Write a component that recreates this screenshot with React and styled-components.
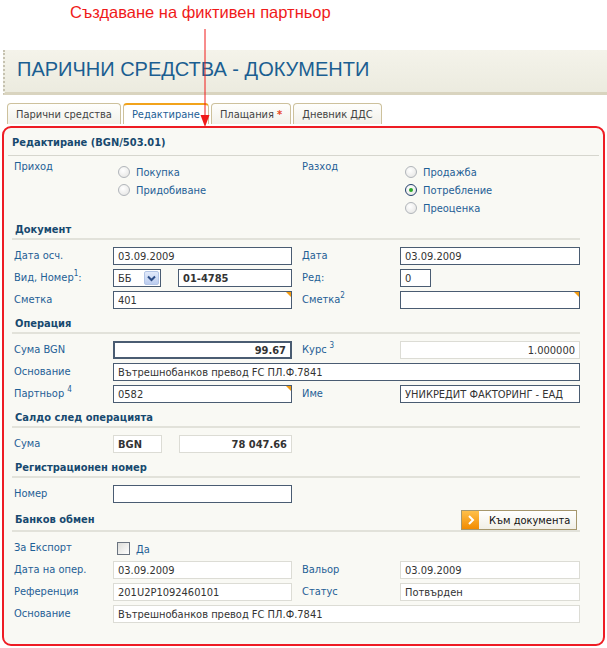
import React from 'react';
import styled, { createGlobalStyle, css } from 'styled-components';

const GlobalStyle = createGlobalStyle`
  html, body {
    margin: 0;
    padding: 0;
    background: #fff;
  }
  body {
    font-family: "DejaVu Sans Condensed", "Liberation Sans", sans-serif;
    font-size: 11px;
    color: #333;
  }
`;

const Page = styled.div`
  position: relative;
  width: 607px;
  height: 648px;
  overflow: hidden;
`;

const Annotation = styled.div`
  height: 50px;
  box-sizing: border-box;
  padding: 3px 0 0 70px;
  font-family: "Liberation Sans", Arial, sans-serif;
  font-size: 16.5px;
  color: #f01a1a;
`;

const Arrow = styled.svg`
  position: absolute;
  left: 199px;
  top: 29px;
`;

const Banner = styled.div`
  margin-left: 3px;
  height: 42px;
  display: flex;
  align-items: center;
  padding-left: 12px;
  border-left: 2px dotted #c6c2b0;
  border-bottom: 3px solid #d9d4bf;
  background: linear-gradient(#f4f3ea, #ecebdf);
`;

const Title = styled.h1`
  margin: 0 0 3px;
  font-family: "Liberation Sans", Arial, sans-serif;
  font-weight: normal;
  font-size: 20px;
  color: #1b5e91;
`;

const Tabs = styled.div`
  display: flex;
  gap: 2px;
  margin-top: 8px;
  padding-left: 7px;
`;

const Tab = styled.div`
  height: 21px;
  box-sizing: border-box;
  display: flex;
  align-items: center;
  padding: 0 8px;
  border: 1px solid #cdc19c;
  border-bottom: none;
  border-radius: 4px 4px 0 0;
  background: linear-gradient(#fefefc, #f2f1ea);
  color: #444;
  ${p => p.$active && css`
    border-top: 2px solid #f2a31b;
    background: #fff;
    color: #1d6096;
  `}
`;

const Star = styled.span`
  color: #e8451c;
  font-weight: bold;
  margin-left: 3px;
`;

const Panel = styled.div`
  margin: 2px 2px 0;
  border: 2px solid #ee1c24;
  border-radius: 9px;
  background: #f9f9f4;
  padding-bottom: 19px;
`;

const PanelHeader = styled.div`
  margin: 0 4px;
  padding: 8px 4px 5px;
  line-height: 14px;
  border-bottom: 1px solid #d6d6ce;
  font-weight: bold;
  color: #17496f;
`;

const Body = styled.div`
  padding: 0 23px 0 8px;
`;

const TypeRow = styled.div`
  display: grid;
  grid-template-columns: 99px 179px 108px 180px;
  align-items: start;
  padding: 3px 0 0 2px;
`;

const Label = styled.div`
  color: #1f6096;
  line-height: 16px;
  white-space: nowrap;
  padding-left: ${p => (p.$right ? 10 : 0)}px;
`;

const Sup = styled.sup`
  font-size: 8px;
  line-height: 0;
  vertical-align: 5px;
  margin-left: ${p => (p.$gap ? 3 : 0)}px;
`;

const RadioList = styled.div`
  display: flex;
  flex-direction: column;
  padding: 4px 0 0 5px;
`;

const RadioItem = styled.label`
  height: 18px;
  display: flex;
  align-items: center;
  gap: 6px;
  color: #1f6096;
`;

const RadioDot = styled.span`
  width: 12px;
  height: 12px;
  box-sizing: border-box;
  border-radius: 50%;
  border: 1px solid ${p => (p.$checked ? '#23406d' : '#b1b5ba')};
  background: radial-gradient(circle at 40% 35%, #ffffff, #e2e2e0);
  display: flex;
  align-items: center;
  justify-content: center;
  &::after {
    content: '';
    width: 4px;
    height: 4px;
    border-radius: 50%;
    background: ${p => (p.$checked ? '#2aa62a' : 'transparent')};
  }
`;

const Section = styled.div`
  margin-top: 5px;
`;

const SectionHead = styled.div`
  display: flex;
  align-items: center;
  justify-content: space-between;
  min-height: 16px;
  padding: 0 3px;
  border-bottom: 2px solid #e2e2da;
`;

const SectionTitle = styled.div`
  font-weight: bold;
  color: #17496f;
  line-height: 16px;
`;

const Grid = styled.div`
  display: grid;
  grid-template-columns: 99px 179px 108px 180px;
  grid-auto-rows: 22px;
  align-items: center;
  padding: 5px 0 0 2px;
`;

const FieldWrap = styled.div`
  position: relative;
  display: flex;
  gap: 17px;
  width: ${p => (p.$w ? `${p.$w}px` : 'auto')};
  grid-column: ${p => (p.$wide ? '2 / -1' : 'auto')};
`;

const Input = styled.input`
  flex: 1;
  min-width: 0;
  width: 100%;
  height: 18px;
  box-sizing: border-box;
  margin: 0;
  padding: 0 4px;
  font: inherit;
  color: #333;
  background: #fff;
  outline: none;
  border: 1px solid ${p => (p.$ro ? '#dcdcd5' : '#4a5c72')};
  border-width: ${p => (p.$thick ? '2px' : '1px')};
  font-weight: ${p => (p.$bold ? 'bold' : 'normal')};
  text-align: ${p => (p.$right ? 'right' : 'left')};
  ${p => p.$fixed && css`
    flex: none;
    width: ${p.$fixed}px;
  `}
`;

const Corner = styled.span`
  position: absolute;
  top: 1px;
  right: 1px;
  width: 0;
  height: 0;
  border-top: 5px solid #f39c12;
  border-left: 5px solid transparent;
`;

const Select = styled.div`
  width: 48px;
  height: 18px;
  box-sizing: border-box;
  border: 1px solid #4a5c72;
  background: #fff;
  display: flex;
  align-items: center;
  justify-content: space-between;
  padding-left: 4px;
  color: #333;
`;

const DropBtn = styled.span`
  width: 15px;
  height: 14px;
  margin-right: 1px;
  box-sizing: border-box;
  border: 1px solid #b3c5e6;
  border-radius: 2px;
  background: linear-gradient(#e2eafa, #bccdef);
  display: flex;
  align-items: center;
  justify-content: center;
`;

const CheckLine = styled.label`
  display: flex;
  align-items: center;
  gap: 6px;
  padding-left: 4px;
  color: #1f6096;
`;

const CheckBox = styled.span`
  width: 13px;
  height: 13px;
  box-sizing: border-box;
  border: 1px solid #6b7480;
  background: linear-gradient(135deg, #dcdcd8, #ffffff);
`;

const CheckText = styled.span`
  padding-top: 3px;
`;

const Button = styled.button`
  height: 20px;
  width: 116px;
  margin: 0 0 0 auto;
  padding: 0;
  display: flex;
  align-items: center;
  gap: 10px;
  font: inherit;
  color: #111;
  border: 1px solid #a6976d;
  background: linear-gradient(#ffffff, #f1efe6);
  cursor: pointer;
`;

const ButtonIcon = styled.span`
  width: 17px;
  height: 18px;
  background: linear-gradient(#ffc04a, #f28b00);
  display: flex;
  align-items: center;
  justify-content: center;
`;

function Radio({ checked, children }) {
  return (
    <RadioItem>
      <RadioDot $checked={checked} />
      {children}
    </RadioItem>
  );
}

function Field({ value = '', corner, wide, w, ...rest }) {
  return (
    <FieldWrap $wide={wide} $w={w}>
      <Input readOnly defaultValue={value} {...rest} />
      {corner && <Corner />}
    </FieldWrap>
  );
}

export default function App() {
  return (
    <Page>
      <GlobalStyle />
      <Annotation>Създаване на фиктивен партньор</Annotation>
      <Arrow width="12" height="100" viewBox="0 0 12 100">
        <line x1="6" y1="0" x2="6" y2="88" stroke="#f01a1a" strokeWidth="1" />
        <polygon points="1.5,86 10.5,86 6,98" fill="#f01a1a" />
      </Arrow>

      <Banner>
        <Title>ПАРИЧНИ СРЕДСТВА - ДОКУМЕНТИ</Title>
      </Banner>

      <Tabs>
        <Tab>Парични средства</Tab>
        <Tab $active>Редактиране</Tab>
        <Tab>Плащания<Star>*</Star></Tab>
        <Tab>Дневник ДДС</Tab>
      </Tabs>

      <Panel>
        <PanelHeader>Редактиране (BGN/503.01)</PanelHeader>
        <Body>
          <TypeRow>
            <Label>Приход</Label>
            <RadioList>
              <Radio>Покупка</Radio>
              <Radio>Придобиване</Radio>
            </RadioList>
            <Label $right>Разход</Label>
            <RadioList>
              <Radio>Продажба</Radio>
              <Radio checked>Потребление</Radio>
              <Radio>Преоценка</Radio>
            </RadioList>
          </TypeRow>

          <Section>
            <SectionHead><SectionTitle>Документ</SectionTitle></SectionHead>
            <Grid>
              <Label>Дата осч.</Label>
              <Field value="03.09.2009" />
              <Label $right>Дата</Label>
              <Field value="03.09.2009" />

              <Label>Вид, Номер<Sup>1</Sup>:</Label>
              <FieldWrap>
                <Select>
                  ББ
                  <DropBtn>
                    <svg width="9" height="7" viewBox="0 0 9 7">
                      <path d="M1 1.5 L4.5 5 L8 1.5" fill="none" stroke="#2d4d86" strokeWidth="2" />
                    </svg>
                  </DropBtn>
                </Select>
                <Input readOnly defaultValue="01-4785" $bold />
              </FieldWrap>
              <Label $right>Ред:</Label>
              <Field value="0" w={31} />

              <Label>Сметка</Label>
              <Field value="401" corner />
              <Label $right>Сметка<Sup>2</Sup></Label>
              <Field corner />
            </Grid>
          </Section>

          <Section>
            <SectionHead><SectionTitle>Операция</SectionTitle></SectionHead>
            <Grid>
              <Label>Сума BGN</Label>
              <Field value="99.67" $bold $right $thick />
              <Label $right>Курс<Sup $gap>3</Sup></Label>
              <Field value="1.000000" $ro $right />

              <Label>Основание</Label>
              <Field value="Вътрешнобанков превод FC ПЛ.Ф.7841" wide />

              <Label>Партньор<Sup $gap>4</Sup></Label>
              <Field value="0582" corner />
              <Label $right>Име</Label>
              <Field value="УНИКРЕДИТ ФАКТОРИНГ - ЕАД" />
            </Grid>
          </Section>

          <Section>
            <SectionHead><SectionTitle>Салдо след операцията</SectionTitle></SectionHead>
            <Grid>
              <Label>Сума</Label>
              <FieldWrap>
                <Input readOnly defaultValue="BGN" $ro $bold $fixed={49} />
                <Input readOnly defaultValue="78 047.66" $ro $bold $right />
              </FieldWrap>
            </Grid>
          </Section>

          <Section>
            <SectionHead><SectionTitle>Регистрационен номер</SectionTitle></SectionHead>
            <Grid>
              <Label>Номер</Label>
              <Field />
            </Grid>
          </Section>

          <Section>
            <SectionHead>
              <SectionTitle>Банков обмен</SectionTitle>
              <Button>
                <ButtonIcon>
                  <svg width="8" height="10" viewBox="0 0 8 10">
                    <path d="M2 1 L6 5 L2 9" fill="none" stroke="#fff" strokeWidth="2" />
                  </svg>
                </ButtonIcon>
                Към документа
              </Button>
            </SectionHead>
            <Grid>
              <Label>За Експорт</Label>
              <CheckLine>
                <CheckBox />
                <CheckText>Да</CheckText>
              </CheckLine>
              <span />
              <span />

              <Label>Дата на опер.</Label>
              <Field value="03.09.2009" $ro />
              <Label $right>Вальор</Label>
              <Field value="03.09.2009" $ro />

              <Label>Референция</Label>
              <Field value="201U2P1092460101" $ro />
              <Label $right>Статус</Label>
              <Field value="Потвърден" $ro />

              <Label>Основание</Label>
              <Field value="Вътрешнобанков превод FC ПЛ.Ф.7841" $ro wide />
            </Grid>
          </Section>
        </Body>
      </Panel>
    </Page>
  );
}
